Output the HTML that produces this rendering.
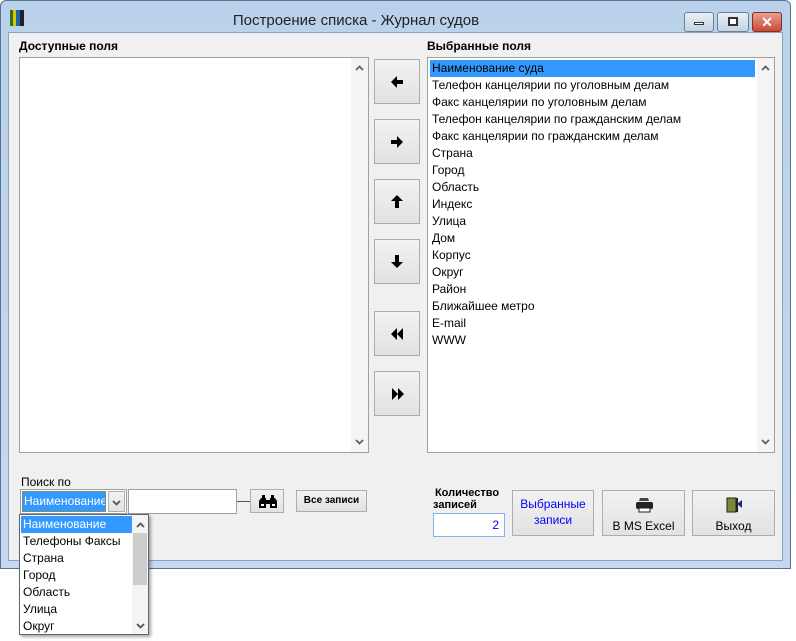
<!DOCTYPE html>
<html><head><meta charset="utf-8"><style>
*{box-sizing:border-box;margin:0;padding:0}
body{width:796px;height:641px;background:#fff;position:relative;font-family:"Liberation Sans",Arial,sans-serif;overflow:hidden}
.a{position:absolute}
.win{left:0;top:0;width:791px;height:569px;background:linear-gradient(#b9d1ea,#c4d9ef);border:1px solid #5a7290;border-radius:6px 6px 0 0}
.cli{left:8px;top:32px;width:775px;height:529px;background:#f0f0f0;border:1px solid #8aa4c0}
.lst{background:#fff;border:1px solid #a0a0a0}
.btn{background:linear-gradient(#f2f2f2,#e2e2e2);border:1px solid #adadad}
.t{font-size:12px;color:#000;white-space:nowrap}
.sb{background:#f4f4f4}
.row{position:absolute;left:4px;font-size:12px;height:17px;line-height:17px;white-space:nowrap}
.dd{left:19px;top:514px;width:130px;height:121px;background:#fff;border:1px solid #646464;box-shadow:2px 2px 3px rgba(0,0,0,.35)}
.cb{position:absolute;width:36px;height:20px;border:1px solid #6d7f95;border-radius:3px;background:linear-gradient(#e9eff6,#c6d3e3)}
svg{position:absolute}
</style></head><body>
<div class="a win"></div>
<div class="a" style="left:10px;top:10px;width:14px;height:16px;background:linear-gradient(90deg,#2a6f2a 0 3px,#e4c200 3px 6px,#2060b0 6px 10px,#222 10px 14px)"></div>
<div class="a t" style="left:0;width:712px;top:12px;text-align:center;font-size:15px;color:#222">Построение списка - Журнал судов</div>
<div class="cb" style="left:684px;top:12px;width:30px"><div class="a" style="left:9px;top:9px;width:10px;height:3px;background:#fff;border:1px solid #333"></div></div>
<div class="cb" style="left:717px;top:12px;width:32px"><div class="a" style="left:10px;top:4px;width:10px;height:9px;border:2px solid #333;background:#fff"></div></div>
<div class="cb" style="left:752px;top:12px;width:30px;background:linear-gradient(#e8a090,#c74a35);border-color:#8a2c20;color:#fff;font-weight:bold;font-size:14px;text-align:center;line-height:18px">✕</div>
<div class="a cli"></div>

<div class="a t" style="left:19px;top:39px;font-weight:bold">Доступные поля</div>
<div class="a t" style="left:427px;top:39px;font-weight:bold">Выбранные поля</div>

<div class="a lst" style="left:19px;top:57px;width:350px;height:396px">
<div class="a sb" style="right:0;top:0;width:17px;height:394px"></div>
<svg style="right:4px;top:7px" width="9" height="6"><path d="M1 5L4.5 1.5L8 5" stroke="#606060" stroke-width="1.8" fill="none"/></svg>
<svg style="right:4px;bottom:7px" width="9" height="6"><path d="M1 1L4.5 4.5L8 1" stroke="#606060" stroke-width="1.8" fill="none"/></svg>
</div>

<div class="a lst" style="left:427px;top:57px;width:348px;height:396px">
<div class="a sb" style="right:0;top:0;width:17px;height:394px"></div>
<svg style="right:4px;top:7px" width="9" height="6"><path d="M1 5L4.5 1.5L8 5" stroke="#606060" stroke-width="1.8" fill="none"/></svg>
<svg style="right:4px;bottom:7px" width="9" height="6"><path d="M1 1L4.5 4.5L8 1" stroke="#606060" stroke-width="1.8" fill="none"/></svg>
<div class="a" style="left:2px;top:2px;width:325px;height:17px;background:#3399ff"></div>
<div class="row" style="top:2px">Наименование суда</div>
<div class="row" style="top:19px">Телефон канцелярии по уголовным делам</div>
<div class="row" style="top:36px">Факс канцелярии по уголовным делам</div>
<div class="row" style="top:53px">Телефон канцелярии по гражданским делам</div>
<div class="row" style="top:70px">Факс канцелярии по гражданским делам</div>
<div class="row" style="top:87px">Страна</div>
<div class="row" style="top:104px">Город</div>
<div class="row" style="top:121px">Область</div>
<div class="row" style="top:138px">Индекс</div>
<div class="row" style="top:155px">Улица</div>
<div class="row" style="top:172px">Дом</div>
<div class="row" style="top:189px">Корпус</div>
<div class="row" style="top:206px">Округ</div>
<div class="row" style="top:223px">Район</div>
<div class="row" style="top:240px">Ближайшее метро</div>
<div class="row" style="top:257px">E-mail</div>
<div class="row" style="top:274px">WWW</div>
</div>

<div class="a btn" style="left:374px;top:59px;width:46px;height:45px"><svg style="left:16px;top:16px" width="12" height="12"><path d="M0 6L6 0V4H12V8H6V12Z" fill="#000"/></svg></div>
<div class="a btn" style="left:374px;top:119px;width:46px;height:45px"><svg style="left:16px;top:16px" width="12" height="12"><path d="M12 6L6 0V4H0V8H6V12Z" fill="#000"/></svg></div>
<div class="a btn" style="left:374px;top:179px;width:46px;height:45px"><svg style="left:16px;top:15px" width="12" height="13"><path d="M6 0L0 6H4V13H8V6H12Z" fill="#000"/></svg></div>
<div class="a btn" style="left:374px;top:239px;width:46px;height:45px"><svg style="left:16px;top:15px" width="12" height="13"><path d="M6 13L0 7H4V0H8V7H12Z" fill="#000"/></svg></div>
<div class="a btn" style="left:374px;top:311px;width:46px;height:45px"><svg style="left:16px;top:16px" width="13" height="12"><path d="M0 6L6 0V12ZM6 6L12 0V12Z" fill="#000"/></svg></div>
<div class="a btn" style="left:374px;top:371px;width:46px;height:45px"><svg style="left:17px;top:16px" width="13" height="12"><path d="M12 6L6 0V12ZM6 6L0 0V12Z" fill="#000"/></svg></div>

<div class="a t" style="left:21px;top:475px">Поиск по</div>
<div class="a lst" style="left:20px;top:489px;width:107px;height:25px"></div>
<div class="a" style="left:22px;top:491px;width:84px;height:21px;background:#3399ff;border:1px dotted #c08000"></div>
<div class="a t" style="left:24px;top:494px;color:#fff;width:81px;overflow:hidden">Наименование</div>
<div class="a btn" style="left:108px;top:491px;width:17px;height:21px"><svg style="left:3px;top:8px" width="9" height="6"><path d="M1 1L4.5 4.5L8 1" stroke="#555" stroke-width="1.8" fill="none"/></svg></div>
<div class="a lst" style="left:128px;top:489px;width:109px;height:25px"></div>
<div class="a" style="left:237px;top:501px;width:13px;height:1px;background:#555"></div>
<div class="a btn" style="left:250px;top:489px;width:34px;height:24px"><svg style="left:8px;top:4px" width="18" height="14"><path d="M2 4h5v10H0V7ZM11 4h5l2 3v7h-7ZM3 1h3v3H3ZM12 1h3v3h-3ZM7 6h4v4H7Z" fill="#000"/><rect x="2" y="10" width="3" height="2" fill="#fff"/><rect x="13" y="10" width="3" height="2" fill="#fff"/></svg></div>
<div class="a btn t" style="left:296px;top:490px;width:71px;height:22px;text-align:center;line-height:20px;font-size:10px;font-weight:bold">Все записи</div>

<div class="a dd">
<div class="a" style="left:1px;top:1px;width:111px;height:17px;background:#3399ff"></div>
<div class="a sb" style="left:112px;top:0;width:16px;height:119px"></div>
<div class="a" style="left:113px;top:18px;width:14px;height:52px;background:#cdcdcd"></div>
<svg style="left:116px;top:7px" width="9" height="6"><path d="M1 5L4.5 1.5L8 5" stroke="#555" stroke-width="1.8" fill="none"/></svg>
<svg style="left:116px;top:108px" width="9" height="6"><path d="M1 1L4.5 4.5L8 1" stroke="#555" stroke-width="1.8" fill="none"/></svg>
<div class="row" style="top:1px;left:3px;color:#fff">Наименование</div>
<div class="row" style="top:18px;left:3px">Телефоны Факсы</div>
<div class="row" style="top:35px;left:3px">Страна</div>
<div class="row" style="top:52px;left:3px">Город</div>
<div class="row" style="top:69px;left:3px">Область</div>
<div class="row" style="top:86px;left:3px">Улица</div>
<div class="row" style="top:103px;left:3px">Округ</div>
</div>

<div class="a t" style="left:433px;top:487px;font-weight:bold;font-size:11px;line-height:12px;text-align:center;width:68px">Количество<br><span style="display:block;text-align:left">записей</span></div>
<div class="a" style="left:433px;top:513px;width:72px;height:24px;background:#fff;border:1px solid #7eb4ea;color:#0000ff;font-size:12px;text-align:right;padding:4px 5px">2</div>
<div class="a btn t" style="left:512px;top:490px;width:82px;height:46px;text-align:center;color:#0000ff;padding-top:5px;line-height:16px">Выбранные<br>записи</div>
<div class="a btn t" style="left:602px;top:490px;width:83px;height:46px;text-align:center;padding-top:27px;line-height:16px">В MS Excel
<svg style="left:33px;top:7px" width="17" height="15"><path d="M4 0h8l1 3H3Z" fill="#444"/><rect x="0" y="4" width="17" height="7" rx="2" fill="#222"/><rect x="3" y="10" width="11" height="4" fill="#fff" stroke="#222"/></svg></div>
<div class="a btn t" style="left:692px;top:490px;width:83px;height:46px;text-align:center;padding-top:27px;line-height:16px">Выход
<svg style="left:33px;top:6px" width="17" height="16"><rect x="1" y="1" width="9" height="14" fill="#7a8a3a" stroke="#222"/><rect x="10" y="1" width="2" height="14" fill="#222"/><path d="M11 7l5-4v8Z" fill="#1a2a80"/></svg></div>
</body></html>
